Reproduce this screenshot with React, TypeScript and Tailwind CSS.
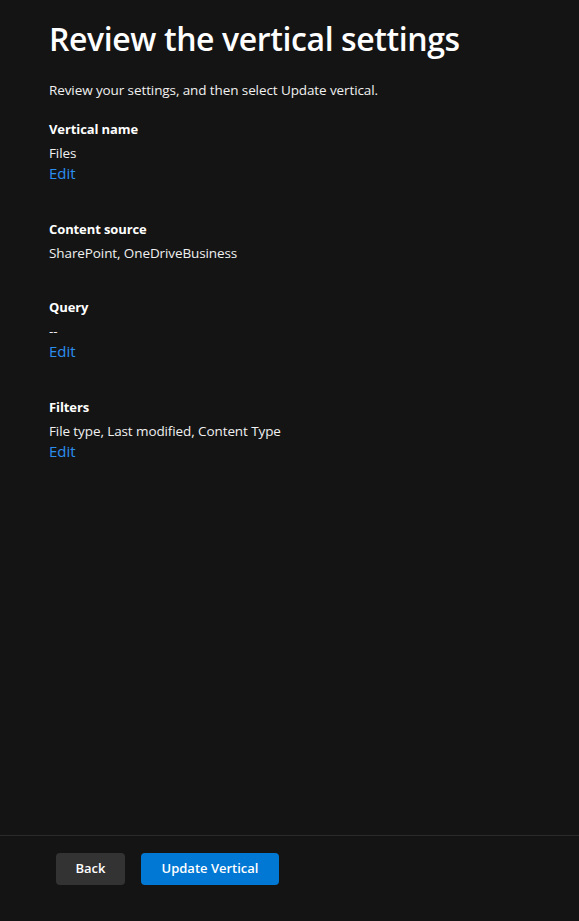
import React from "react";

const sections = [
  { label: "Vertical name", value: "Files", edit: true },
  { label: "Content source", value: "SharePoint, OneDriveBusiness", edit: false },
  { label: "Query", value: "--", edit: true },
  { label: "Filters", value: "File type, Last modified, Content Type", edit: true },
];

const App = () => {
  return (
    <div
      className="h-screen flex flex-col bg-[#141414] text-[#f0f0f0]"
      style={{ fontFamily: '"Open Sans", "Noto Sans", sans-serif' }}
    >
      <div className="flex-1 px-[49px] pt-[19px]">
        <h1 className="text-[32px] leading-[40px] font-semibold tracking-[-0.4px] text-white">
          Review the vertical settings
        </h1>
        <p className="mt-[21px] text-[13.5px] leading-[20px] tracking-[-0.1px]">
          Review your settings, and then select Update vertical.
        </p>

        <div className="mt-[19px] flex flex-col gap-[34px]">
          {sections.map((s) => (
            <div key={s.label}>
              <div className="text-[13px] leading-[20px] font-bold tracking-[-0.1px] text-white">
                {s.label}
              </div>
              <div className="mt-1 text-[13.5px] leading-[20px] tracking-[-0.1px]">{s.value}</div>
              {s.edit && (
                <a className="block mb-[2px] text-[15px] leading-[20px] text-[#2b8ff0] cursor-pointer">
                  Edit
                </a>
              )}
            </div>
          ))}
        </div>
      </div>

      <div className="h-[86px] border-t border-[#2a2a2a] px-[56px] pt-[17px] flex items-start gap-4">
        <button className="h-8 w-[69px] rounded bg-[#333333] text-[13px] font-semibold text-white">
          Back
        </button>
        <button className="h-8 w-[138px] rounded bg-[#0078d4] text-[13px] font-semibold text-white">
          Update Vertical
        </button>
      </div>
    </div>
  );
};

export default App;
